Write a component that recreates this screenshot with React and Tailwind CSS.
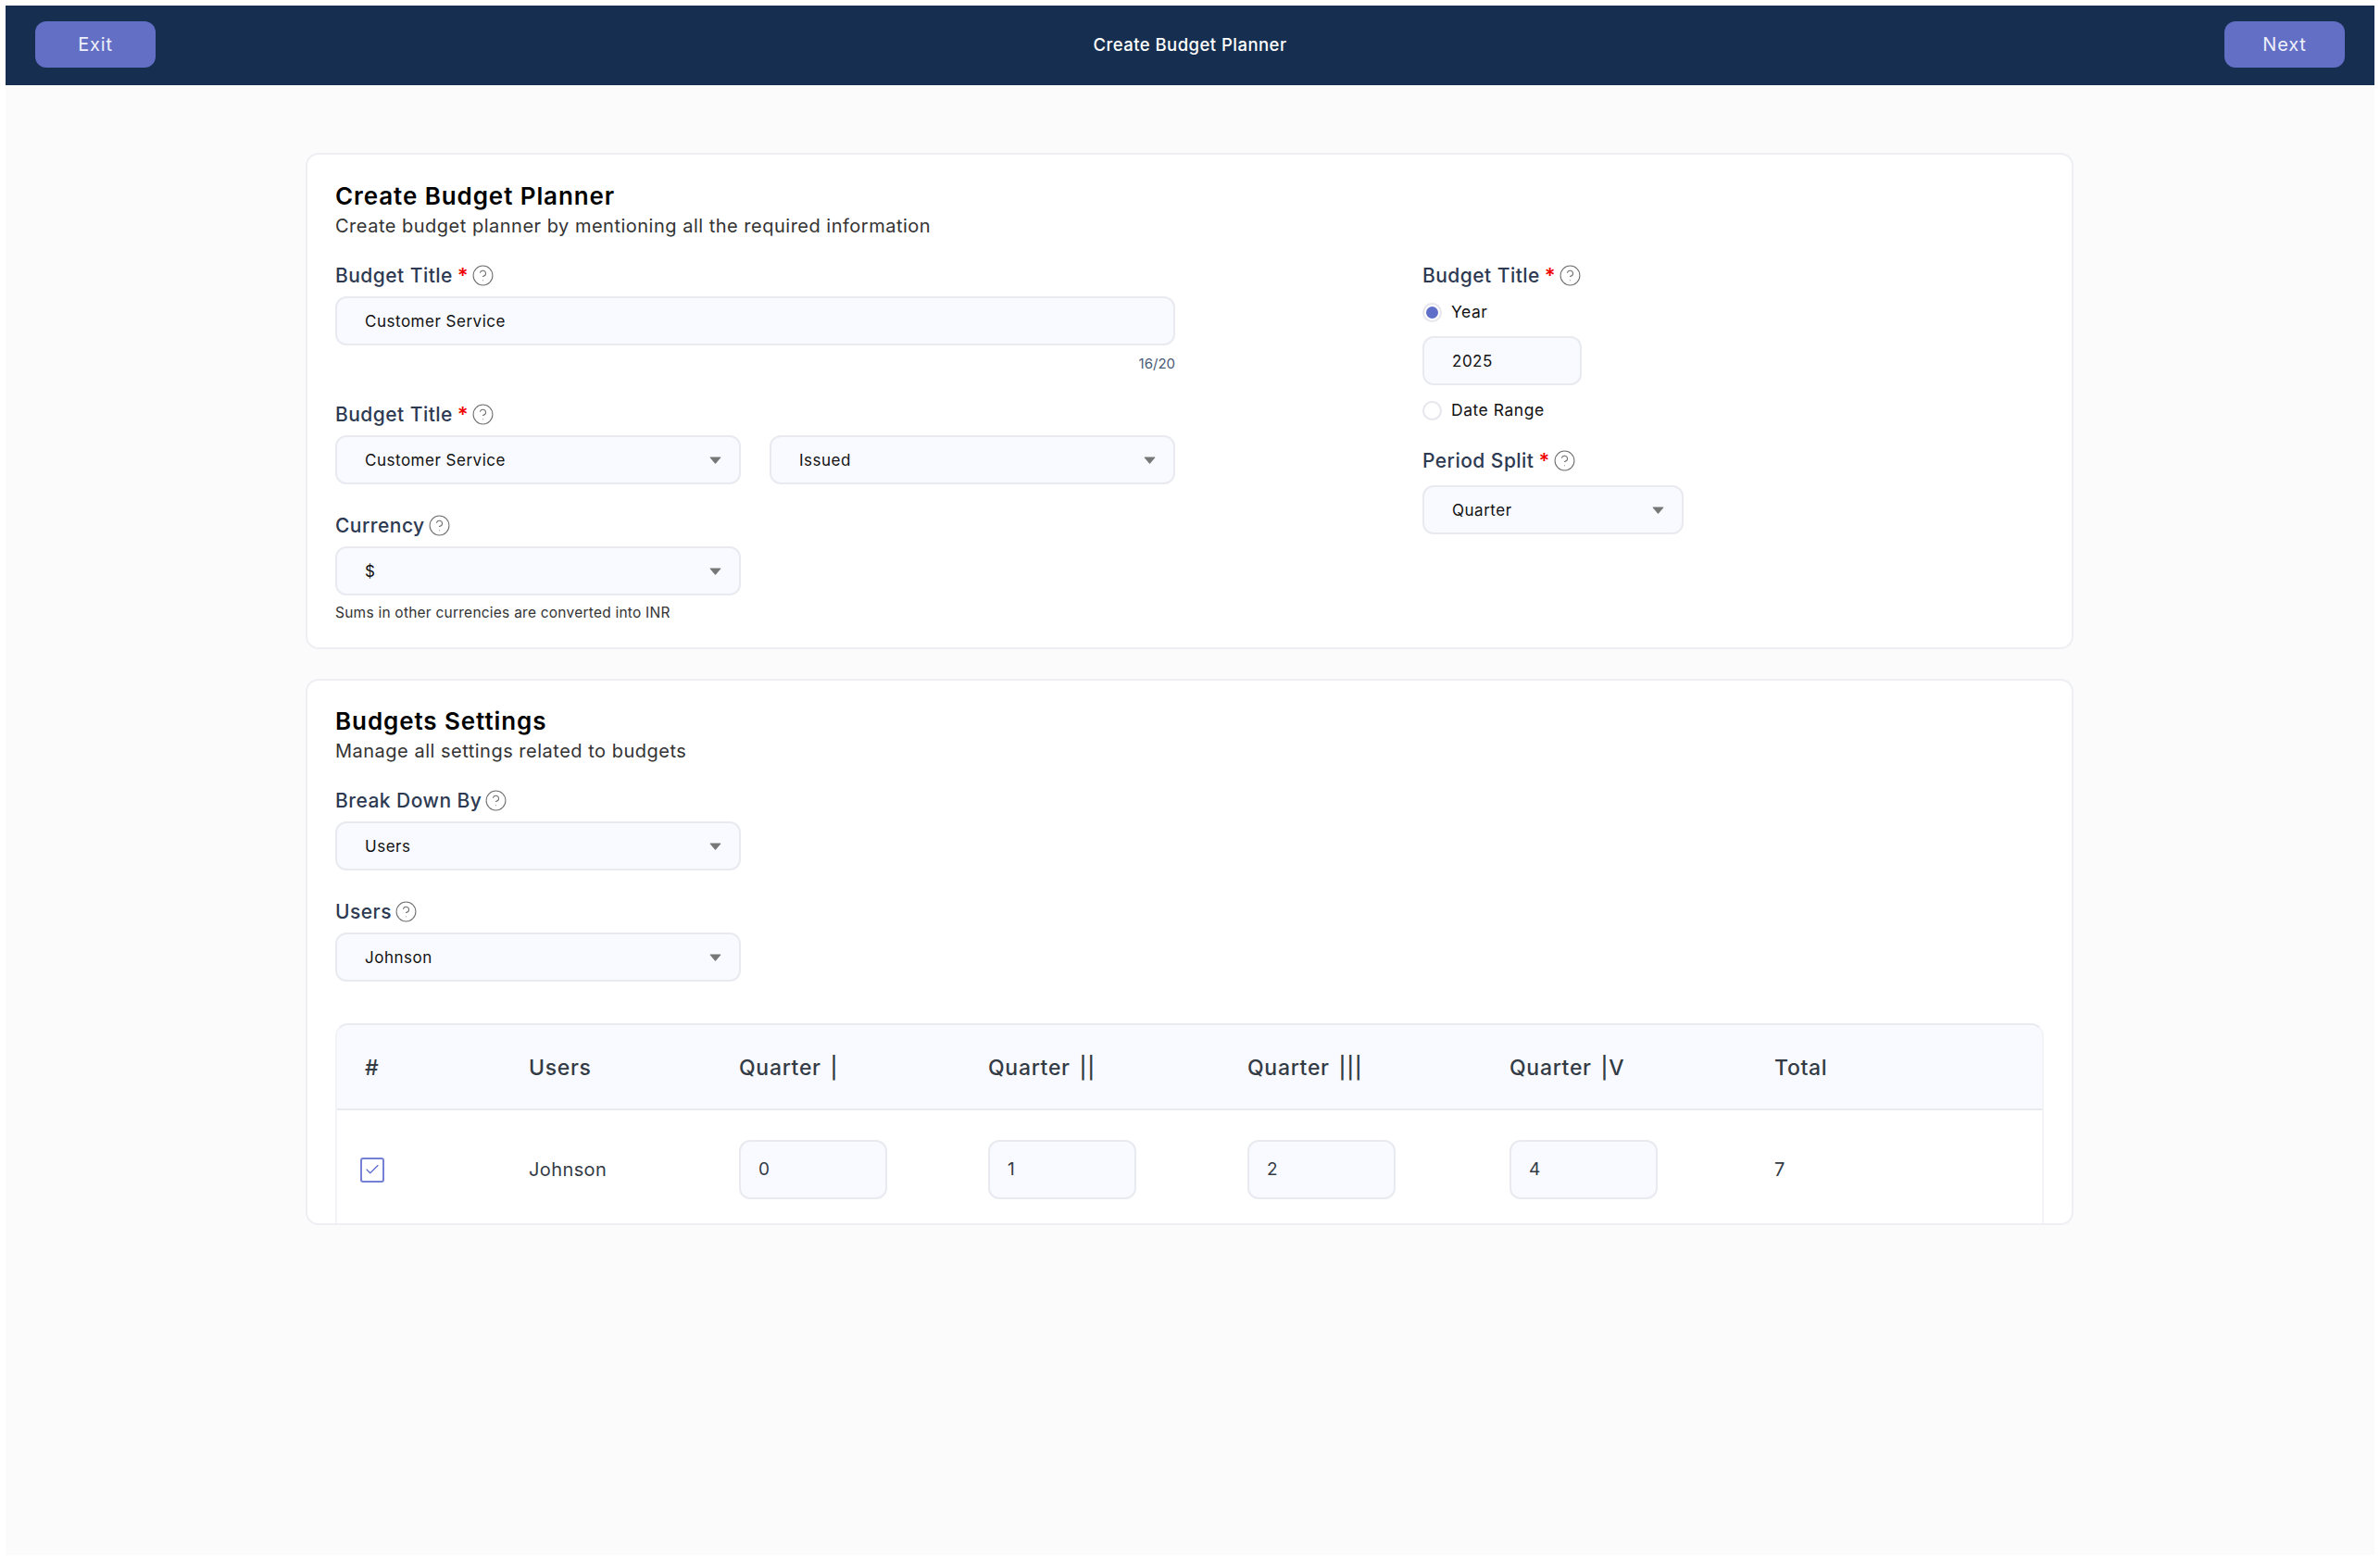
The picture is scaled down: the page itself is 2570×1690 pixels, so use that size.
import React from 'react';
import { Check, CircleHelp } from 'lucide-react';

const Help = () => <CircleHelp size={25} strokeWidth={1} className="text-[#6f6f6f] shrink-0" />;

// small filled caret used by every select
const Caret = () => (
  <svg width="13" height="8" viewBox="0 0 14 9" className="shrink-0">
    <path d="M1 0.5h12a0.6 0.6 0 0 1 0.5 1L7.5 8.4a0.7 0.7 0 0 1-1 0L0.5 1.5a0.6 0.6 0 0 1 0.5-1z" fill="#777777" />
  </svg>
);

const Label = ({ text, required, className = '' }) => (
  <div className={`flex items-center h-[24px] text-[21px] font-medium tracking-[0.022em] text-[#2d3a52] ${className}`}>
    <span className="pt-[2px]">{text}</span>
    {required && <span className="ml-[5px] text-[22px] font-semibold text-[#f00000]">*</span>}
    <span className="ml-[3px]"><Help /></span>
  </div>
);

const Select = ({ value, className = 'w-[438px]' }) => (
  <div className={`flex items-center justify-between h-[53px] pl-[30px] pr-[19px] bg-[#f9faff] border-2 border-[#e9eaf0] rounded-[12px] text-[17px] tracking-[0.03em] text-[#111111] ${className}`}>
    <span className="pt-[2px]">{value}</span>
    <Caret />
  </div>
);

const Heading = ({ title, sub }) => (
  <>
    <h2 className="h-[30px] leading-[30px] text-[26px] font-semibold tracking-[0.035em] text-black">{title}</h2>
    <p className="mt-[4px] h-[26px] leading-[26px] text-[20px] tracking-[0.025em] text-[#333333]">{sub}</p>
  </>
);

const Radio = ({ checked, text }) => (
  <div className="flex items-center h-[24px]">
    <span className="flex items-center justify-center w-[21px] h-[21px] rounded-full bg-white border-2 border-[#e6e6ec]">
      {checked && <span className="w-[13px] h-[13px] rounded-full bg-[#5f6fc9]" />}
    </span>
    <span className="ml-[10px] pt-[1px] text-[17.5px] tracking-[0.03em] text-[#111111]">{text}</span>
  </div>
);

const QuarterInput = ({ value }) => (
  <div className="flex items-center w-[160px] h-[64px] pl-[19px] bg-[#f9faff] border-2 border-[#e9eaf0] rounded-[12px] text-[19px] tracking-[0.03em] text-[#333b45]">
    {value}
  </div>
);

const tableCols = 'grid grid-cols-[177px_227px_269px_280px_283px_286px_1fr] pl-[30px]';

export default function App() {
  return (
    <div className="w-full h-[1690px] bg-white pt-[6px] px-[6px] pb-[11px] font-['Inter',sans-serif]">
      <div className="h-full bg-[#fbfbfb]">
        {/* Top bar */}
        <header className="flex items-center justify-between h-[86px] px-[32px] pb-[2px] bg-[#162f50] text-white">
          <button className="w-[130px] h-[50px] bg-[#626fc4] rounded-[12px] text-[20px] tracking-[0.04em] text-[#eef0fb]">Exit</button>
          <div className="pt-[2px] text-[18.5px] font-medium tracking-[0.025em]">Create Budget Planner</div>
          <button className="w-[130px] h-[50px] bg-[#626fc4] rounded-[12px] text-[20px] tracking-[0.04em] text-[#eef0fb]">Next</button>
        </header>

        <main className="ml-[324px] w-[1909px] pt-[73px] flex flex-col gap-[32px]">
          {/* Create Budget Planner */}
          <section className="h-[536px] pt-[30px] pl-[30px] pr-[30px] bg-white border-2 border-[#eeeff2] rounded-[14px]">
            <Heading title="Create Budget Planner" sub="Create budget planner by mentioning all the required information" />
            <div className="flex mt-[28px]">
              <div className="w-[907px]">
                <Label text="Budget Title" required />
                <div className="mt-[11px] flex items-center h-[53px] pl-[30px] pt-[3px] bg-[#f9faff] border-2 border-[#e9eaf0] rounded-[12px] text-[17px] tracking-[0.03em] text-[#111111]">
                  Customer Service
                </div>
                <div className="mt-[10px] h-[20px] leading-[20px] text-right text-[15px] text-[#4b5a78]">16/20</div>
                <Label text="Budget Title" required className="mt-[32px]" />
                <div className="mt-[11px] flex gap-[31px]">
                  <Select value="Customer Service" />
                  <Select value="Issued" />
                </div>
                <Label text="Currency" className="mt-[32px]" />
                <Select value="$" className="mt-[11px] w-[438px]" />
                <p className="mt-[9px] h-[20px] leading-[20px] text-[15.5px] tracking-[0.015em] text-[#333333]">Sums in other currencies are converted into INR</p>
              </div>
              <div className="ml-[267px]">
                <Label text="Budget Title" required />
                <div className="mt-[16px]"><Radio checked text="Year" /></div>
                <div className="mt-[14px] flex items-center w-[172px] h-[53px] pl-[30px] pt-[3px] bg-[#f9faff] border-2 border-[#e9eaf0] rounded-[12px] text-[17px] tracking-[0.03em] text-[#111111]">2025</div>
                <div className="mt-[15px]"><Radio text="Date Range" /></div>
                <Label text="Period Split" required className="mt-[30px]" />
                <Select value="Quarter" className="mt-[15px] w-[282px]" />
              </div>
            </div>
          </section>

          {/* Budgets Settings */}
          <section className="h-[590px] pt-[29px] pl-[30px] pr-[30px] bg-white border-2 border-[#eeeff2] rounded-[14px]">
            <Heading title="Budgets Settings" sub="Manage all settings related to budgets" />
            <Label text="Break Down By" className="mt-[28px]" />
            <Select value="Users" className="mt-[11px] w-[438px]" />
            <Label text="Users" className="mt-[32px]" />
            <Select value="Johnson" className="mt-[11px] w-[438px]" />

            <div className="mt-[45px] h-[216px] border-x-2 border-t-2 border-x-[#f3f4f7] border-t-[#e9eaf0] rounded-t-[14px]">
              <div className={`${tableCols} items-center h-[92px] pt-[2px] bg-[#f9faff] border-b-2 border-[#e9eaf0] rounded-t-[12px] text-[23px] font-medium tracking-[0.03em] [word-spacing:3px] text-[#333b45]`}>
                <div>#</div>
                <div>Users</div>
                <div>Quarter |</div>
                <div>Quarter ||</div>
                <div>Quarter |||</div>
                <div>Quarter |V</div>
                <div>Total</div>
              </div>
              <div className={`${tableCols} items-center pt-[32px] text-[20px] tracking-[0.02em] text-[#333b45]`}>
                <div>
                  <span className="flex items-center justify-center -ml-[5px] w-[26px] h-[27px] bg-white border-2 border-[#7480d4] rounded-[3px]">
                    <Check size={18} strokeWidth={1.5} className="text-[#5865c8]" />
                  </span>
                </div>
                <div>Johnson</div>
                <QuarterInput value="0" />
                <QuarterInput value="1" />
                <QuarterInput value="2" />
                <QuarterInput value="4" />
                <div>7</div>
              </div>
            </div>
          </section>
        </main>
      </div>
    </div>
  );
}
